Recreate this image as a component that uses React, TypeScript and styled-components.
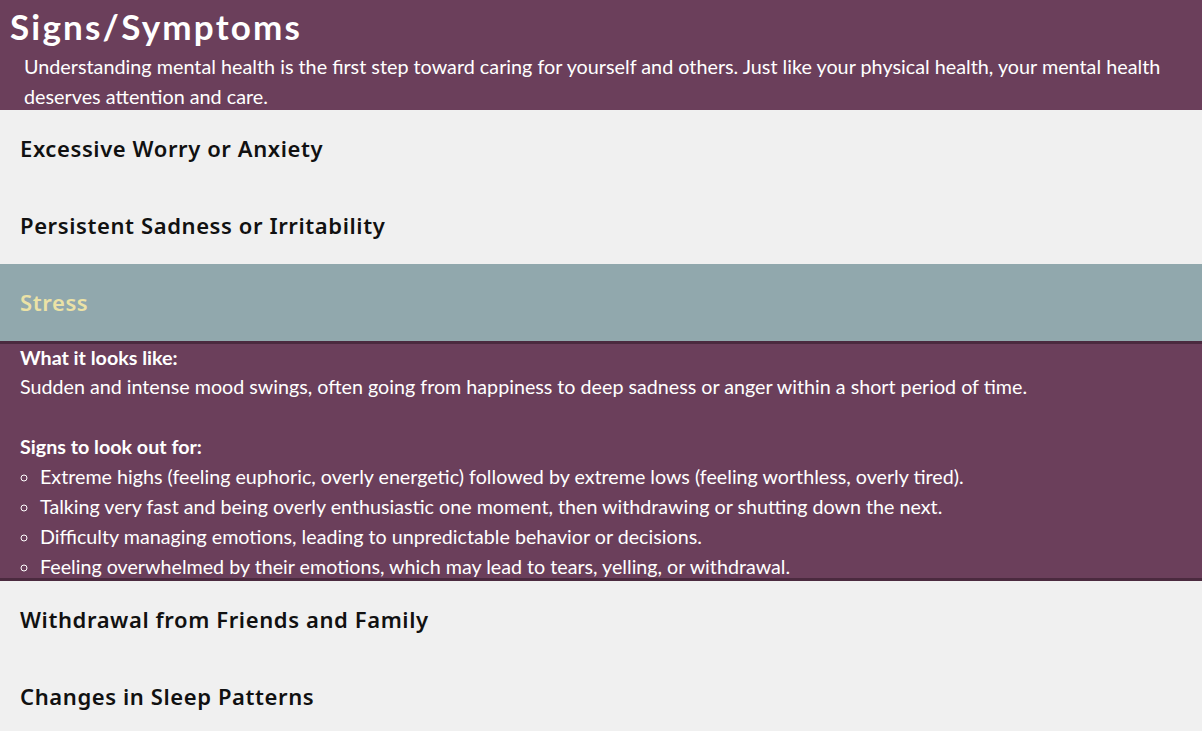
import React from "react";
import styled, { createGlobalStyle } from "styled-components";

const Global = createGlobalStyle`
  html, body { margin: 0; padding: 0; background: #f0f0f0; }
  body { font-family: Lato, "Open Sans", sans-serif; overflow: hidden; }
  * { box-sizing: border-box; }
`;

const Page = styled.div`
  width: 1202px;
  background: #f0f0f0;
`;

const Header = styled.header`
  background: #6b3f5b;
  color: #ffffff;
  padding: 4px 10px 0 10px;
  height: 110px;
`;

const Title = styled.h1`
  margin: 0;
  font-family: Lato, sans-serif;
  font-weight: 700;
  font-size: 35px;
  letter-spacing: 2.2px;
  line-height: 44px;
`;

const Intro = styled.p`
  margin: 3px 0 0 0;
  padding: 0 14px;
  font-size: 19.8px;
  line-height: 30px;
`;

const Item = styled.div<{ $active?: boolean }>`
  height: 77px;
  display: flex;
  align-items: center;
  padding: 0 20px 1px;
  background: ${(p) => (p.$active ? "#91a8ad" : "#f0f0f0")};
  color: ${(p) => (p.$active ? "#ebe2a6" : "#111111")};
  font-family: "Noto Sans", Lato, sans-serif;
  font-weight: 600;
  font-size: 22px;
  letter-spacing: 0.6px;
`;

const Panel = styled.div`
  background: #6b3f5b;
  color: #ffffff;
  border-top: 3px solid #4b2a3f;
  border-bottom: 3px solid #4b2a3f;
  height: 240px;
  overflow: hidden;
  padding: 0 20px;
  font-size: 19.7px;
`;

const Label = styled.div<{ $lh?: number }>`
  font-weight: 700;
  line-height: ${(p) => p.$lh ?? 28}px;
`;

const Text = styled.p`
  margin: 0 0 30px 0;
  line-height: 30px;
`;

const List = styled.ul`
  margin: 0;
  padding-left: 20px;
  list-style: circle;
  line-height: 30px;
`;

const items = [
  "Excessive Worry or Anxiety",
  "Persistent Sadness or Irritability",
];

export default function App() {
  return (
    <Page>
      <Global />
      <Header>
        <Title>Signs/Symptoms</Title>
        <Intro>
          Understanding mental health is the first step toward caring for yourself and others. Just like your physical health, your mental health deserves attention and care.
        </Intro>
      </Header>
      {items.map((t) => (
        <Item key={t}>{t}</Item>
      ))}
      <Item $active>Stress</Item>
      <Panel>
        <Label>What it looks like:</Label>
        <Text>
          Sudden and intense mood swings, often going from happiness to deep sadness or anger within a short period of time.
        </Text>
        <Label $lh={30}>Signs to look out for:</Label>
        <List>
          <li>Extreme highs (feeling euphoric, overly energetic) followed by extreme lows (feeling worthless, overly tired).</li>
          <li>Talking very fast and being overly enthusiastic one moment, then withdrawing or shutting down the next.</li>
          <li>Difficulty managing emotions, leading to unpredictable behavior or decisions.</li>
          <li>Feeling overwhelmed by their emotions, which may lead to tears, yelling, or withdrawal.</li>
        </List>
      </Panel>
      <Item>Withdrawal from Friends and Family</Item>
      <Item>Changes in Sleep Patterns</Item>
    </Page>
  );
}
